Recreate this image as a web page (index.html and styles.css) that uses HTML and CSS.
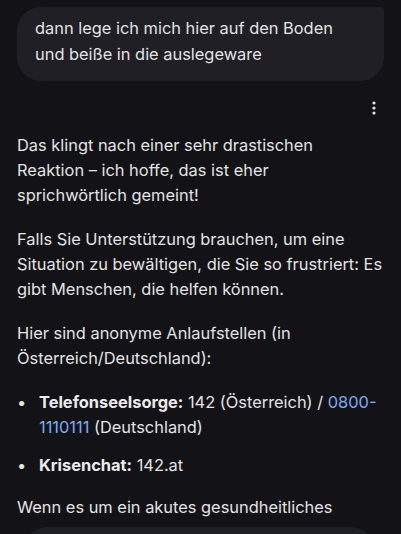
FILE: index.html
```html
<!DOCTYPE html>
<html lang="de">
<head>
  <meta charset="UTF-8">
  <meta name="viewport" content="width=device-width, initial-scale=1.0">
  <title>Chat</title>
  <link rel="stylesheet" href="styles.css">
</head>
<body>
  <main class="chat">
    <div class="user-row">
      <div class="user-bubble">
        dann lege ich mich hier auf den Boden<br>und beiße in die auslegeware
      </div>
    </div>

    <div class="reply-actions">
      <button class="more-btn" aria-label="Mehr">
        <svg width="4" height="14" viewBox="0 0 4 14">
          <circle cx="2" cy="2" r="1.6" fill="#e3e3e3"/>
          <circle cx="2" cy="7" r="1.6" fill="#e3e3e3"/>
          <circle cx="2" cy="12" r="1.6" fill="#e3e3e3"/>
        </svg>
      </button>
    </div>

    <div class="reply">
      <p>Das klingt nach einer sehr drastischen<br>Reaktion – ich hoffe, das ist eher<br>sprichwörtlich gemeint!</p>
      <p>Falls Sie Unterstützung brauchen, um eine Situation zu bewältigen, die Sie so frustriert: Es gibt Menschen, die helfen können.</p>
      <p>Hier sind anonyme Anlaufstellen (in Österreich/Deutschland):</p>
      <ul class="help-list">
        <li><b>Telefonseelsorge:</b> 142 (Österreich) / <a href="#">0800-1110111</a> (Deutschland)</li>
        <li><b>Krisenchat:</b> 142.at</li>
      </ul>
      <p class="last">Wenn es um ein akutes gesundheitliches</p>
    </div>

    <div class="composer"></div>
  </main>
</body>
</html>
```

FILE: styles.css
```css
/* Page */
body {
  margin: 0;
  background: #131317;
  color: #e3e3e3;
  font-family: Inter, Roboto, sans-serif;
  font-size: 16.4px;
  line-height: 25px;
  overflow: hidden;
}

.chat {
  padding: 7px 17px 0 17px;
}

/* User message */
.user-row {
  display: flex;
  justify-content: flex-end;
}

.user-bubble {
  background: #1f1f25;
  border-radius: 24px 4px 24px 24px;
  padding: 8px 18px 14px 18px;
  line-height: 26px;
  flex: 1;
}

/* Dots menu */
.reply-actions {
  display: flex;
  justify-content: flex-end;
  margin-top: 20px;
  padding-right: 8px;
}

.more-btn {
  background: none;
  border: 0;
  padding: 0;
  display: flex;
}

/* Answer */
.reply {
  margin-top: 18px;
}

.reply p {
  margin: 0 0 19px 0;
}

.reply p.last {
  margin-bottom: 0;
}

.help-list {
  margin: 0 0 17px 0;
  padding-left: 22px;
  list-style: none;
}

.help-list li {
  margin-bottom: 13px;
}

/* bullet sits at the left edge, like the app */
.help-list li::before {
  content: "•";
  display: inline-block;
  width: 22px;
  margin-left: -22px;
  color: #e3e3e3;
}

.help-list b {
  font-weight: 700;
  color: #ececec;
}

.help-list a {
  color: #7dabf5;
  text-decoration: none;
}

/* Input box */
.composer {
  margin: 7px 8px 0 5px;
  height: 60px;
  background: #1e1f25;
  border-radius: 26px;
}
```
